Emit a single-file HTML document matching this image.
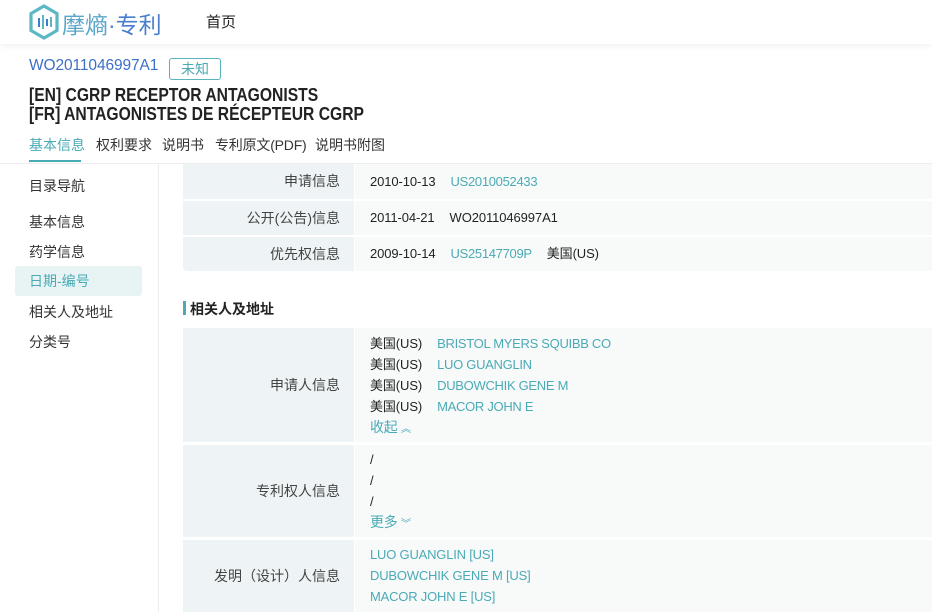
<!DOCTYPE html>
<html><head><meta charset="utf-8"><style>
*{margin:0;padding:0;box-sizing:border-box}
body{width:932px;height:612px;overflow:hidden;background:#fff;font-family:"Liberation Sans","Noto Sans CJK SC",sans-serif;color:#222;font-size:14px;position:relative}
.hdr{position:absolute;left:0;top:0;width:932px;height:44px;background:#fff;box-shadow:0 2px 6px rgba(0,0,0,.06)}
.abs{position:absolute;white-space:nowrap}
.teal{color:#4aaab5}
.side{position:absolute;left:0;top:164px;width:159px;height:448px;border-right:1px solid #ececec;background:#fff}
.side div{position:absolute;left:29px;font-size:14px;color:#333}
.lab{position:absolute;left:183px;width:171px;background:#eef4f5;text-align:right;padding-right:14px;color:#444;font-size:14px}
.val{position:absolute;left:355px;width:577px;background:#f8fafa;padding-left:15px;font-size:13px;letter-spacing:-0.1px;color:#222}
.val .teal{letter-spacing:-0.3px}
.gap{display:inline-block;width:15px}
.tabs span{position:absolute;top:0}
</style></head><body>
<div class="hdr">
<svg class="abs" style="left:28px;top:4px" width="32" height="36" viewBox="0 0 32 36"><path d="M16 2 L29 9.5 L29 26.5 L16 34 L3 26.5 L3 9.5 Z" fill="none" stroke="#5bb7c4" stroke-width="3.2"/><rect x="10" y="14" width="2" height="9" fill="#3d7fc4"/><rect x="14" y="11" width="2" height="14" fill="#5bb7c4"/><rect x="18" y="15" width="2" height="7" fill="#3d7fc4"/><rect x="22" y="13" width="2" height="10" fill="#5bb7c4"/></svg>
<div class="abs" style="left:62px;top:6px;font-size:23px;color:#5aa6c8">摩熵<span style="color:#4a7fd0">·专利</span></div>
<div class="abs" style="left:206px;top:11px;font-size:15px;color:#222">首页</div>
</div>
<div class="abs" style="left:29px;top:57px;font-size:15.5px;color:#3d6fc6;letter-spacing:-0.1px">WO2011046997A1</div>
<div class="abs" style="left:169px;top:58px;width:52px;height:22px;border:1px solid #5ab3bd;border-radius:3px;color:#4aaab5;font-size:14px;text-align:center;line-height:20px">未知</div>
<div class="abs" style="left:29px;top:86px;font-size:18px;font-weight:bold;line-height:19px;color:#222;transform:scaleX(0.87);transform-origin:left top">[EN] CGRP RECEPTOR ANTAGONISTS<br>[FR] ANTAGONISTES DE RÉCEPTEUR CGRP</div>
<div class="abs tabs" style="left:0;top:135px;width:400px;height:20px;font-size:14px;color:#333"><span class="teal" style="left:29px">基本信息</span><span style="left:96px">权利要求</span><span style="left:162px">说明书</span><span style="left:215px;letter-spacing:-0.2px">专利原文(PDF)</span><span style="left:315px">说明书附图</span></div>
<div class="abs" style="left:29px;top:160px;width:52px;height:2px;background:#4aaab5"></div>
<div class="abs" style="left:0;top:163px;width:932px;height:1px;background:#eee"></div>
<div class="side">
<div style="top:12px">目录导航</div>
<div style="top:48px">基本信息</div>
<div style="top:78px">药学信息</div>
<div style="left:15px;top:102px;width:127px;height:30px;background:#e8f3f4;border-radius:3px;padding-left:14px;line-height:30px;color:#4aaab5">日期-编号</div>
<div style="top:138px">相关人及地址</div>
<div style="top:168px">分类号</div>
</div>
<div class="lab" style="top:164px;height:35px;line-height:35px">申请信息</div>
<div class="val" style="top:164px;height:35px;line-height:35px">2010-10-13<span class="gap"></span><span class="teal">US2010052433</span></div>
<div class="lab" style="top:201px;height:34px;line-height:34px">公开(公告)信息</div>
<div class="val" style="top:201px;height:34px;line-height:34px">2011-04-21<span class="gap"></span>WO2011046997A1</div>
<div class="lab" style="top:237px;height:34px;line-height:34px;border-radius:0 0 0 4px">优先权信息</div>
<div class="val" style="top:237px;height:34px;line-height:34px">2009-10-14<span class="gap"></span><span class="teal">US25147709P</span><span class="gap"></span>美国(US)</div>
<div class="abs" style="left:183px;top:301px;width:3px;height:14px;background:#4aaab5"></div>
<div class="abs" style="left:190px;top:299px;font-size:14px;font-weight:bold">相关人及地址</div>
<div class="lab" style="top:328px;height:114px;line-height:114px">申请人信息</div>
<div class="val" style="top:328px;height:114px;padding-top:5px;line-height:21px">美国(US)<span class="gap"></span><span class="teal">BRISTOL MYERS SQUIBB CO</span><br>美国(US)<span class="gap"></span><span class="teal">LUO GUANGLIN</span><br>美国(US)<span class="gap"></span><span class="teal">DUBOWCHIK GENE M</span><br>美国(US)<span class="gap"></span><span class="teal">MACOR JOHN E</span><br><span class="teal" style="font-size:14px">收起 <span style="font-size:10px">︽</span></span></div>
<div class="lab" style="top:445px;height:92px;line-height:92px">专利权人信息</div>
<div class="val" style="top:445px;height:92px;padding-top:4px;line-height:21px">/<br>/<br>/<br><span class="teal" style="font-size:14px">更多 <span style="font-size:10px">︾</span></span></div>
<div class="lab" style="top:540px;height:72px;line-height:72px">发明（设计）人信息</div>
<div class="val" style="top:540px;height:72px;padding-top:4px;line-height:21px;color:#4aaab5;letter-spacing:-0.2px">LUO GUANGLIN [US]<br>DUBOWCHIK GENE M [US]<br>MACOR JOHN E [US]</div>
</body></html>
